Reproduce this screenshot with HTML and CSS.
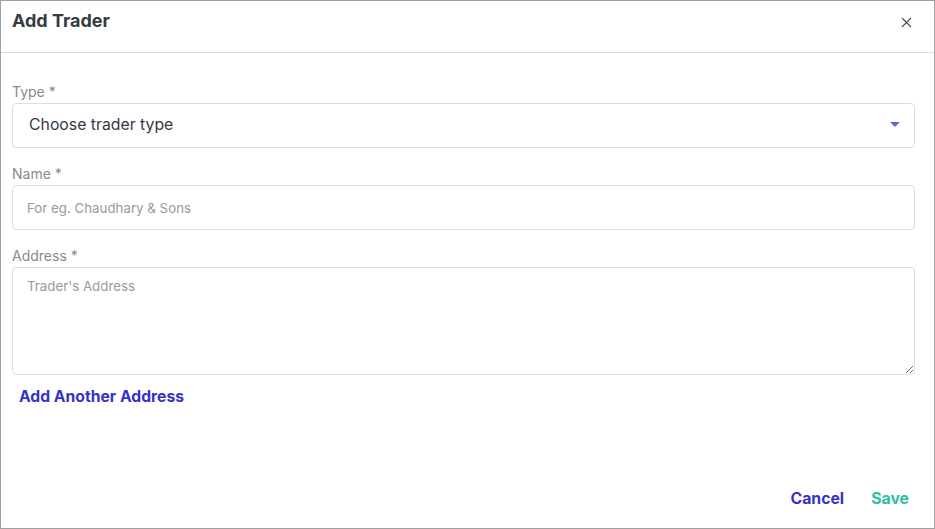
FILE: index.html
```html
<!DOCTYPE html>
<html lang="en">
  <head>
    <meta charset="UTF-8" />
    <title>Add Trader</title>
    <link rel="stylesheet" href="styles.css">
  </head>
  <body>
    <div class="dialog">
      <div class="header">
        <h2>Add Trader</h2>
        <button class="close" type="button" aria-label="Close">
          <svg width="11" height="11" viewBox="0 0 11 11">
            <path d="M1 1L10 10M10 1L1 10" stroke="#4a4a4a" stroke-width="1.1" fill="none" />
          </svg>
        </button>
      </div>

      <form class="body">
        <label>Type *</label>
        <div class="select">
          <span>Choose trader type</span>
          <svg class="caret" width="10" height="6" viewBox="0 0 10 6">
            <path d="M0 0H10L5 5Z" fill="#5b6ad6" />
          </svg>
        </div>

        <label>Name *</label>
        <input type="text" placeholder="For eg. Chaudhary &amp; Sons" />

        <label>Address *</label>
        <textarea placeholder="Trader's Address"></textarea>

        <a class="link" href="#">Add Another Address</a>
      </form>

      <div class="footer">
        <button type="button" class="cancel">Cancel</button>
        <button type="button" class="save">Save</button>
      </div>
    </div>
  </body>
</html>
```

FILE: styles.css
```css
body {
  margin: 0;
  font-family: Inter, "Noto Sans", sans-serif;
  background-color: #fff;
}
.dialog {
  width: 935px;
  height: 529px;
  box-sizing: border-box;
  border: 1px solid #a0a0a0;
  display: flex;
  flex-direction: column;
}
.header {
  height: 51px;
  border-bottom: 1px solid #dcdcdc;
  display: flex;
  align-items: flex-start;
  justify-content: space-between;
  padding: 0 22px 0 11px;
}
.header h2 {
  margin: 9px 0 0;
  font-size: 18px;
  font-weight: bold;
  color: #363a42;
}
.close {
  border: none;
  background: none;
  padding: 0;
  margin-top: 16px;
  width: 11px;
  height: 11px;
  display: flex;
  cursor: pointer;
}
.body {
  flex: 1;
  display: flex;
  flex-direction: column;
  padding: 30px 19px 0 11px;
}
label {
  font-size: 14px;
  color: #8a8a8a;
  line-height: 17px;
  margin-bottom: 3px;
}
.select,
input,
textarea {
  box-sizing: border-box;
  width: 100%;
  border: 1px solid #dddddd;
  border-radius: 4px;
  font-family: Inter, "Noto Sans", sans-serif;
  margin-bottom: 17px;
}
.select {
  height: 45px;
  display: flex;
  align-items: center;
  justify-content: space-between;
  padding: 0 14px 3px 16px;
  font-size: 15.8px;
  color: #363844;
}
.caret {
  margin-top: 2px;
}
input {
  height: 45px;
  padding: 0 14px;
  font-size: 13.3px;
}
textarea {
  height: 108px;
  padding: 10px 14px;
  font-size: 13.3px;
  margin-bottom: 12px;
  resize: vertical;
}
input::placeholder,
textarea::placeholder {
  color: #9a9a9a;
}
.link {
  margin-left: 7px;
  font-size: 15.7px;
  font-weight: bold;
  color: #3434c4;
  text-decoration: none;
}
.footer {
  display: flex;
  justify-content: flex-end;
  gap: 27px;
  padding: 0 25px 20px 0;
}
.footer button {
  border: none;
  background: none;
  padding: 0;
  font-family: Inter, "Noto Sans", sans-serif;
  font-size: 15.8px;
  font-weight: bold;
  cursor: pointer;
}
.cancel {
  color: #3434c4;
}
.save {
  color: #2fbea6;
}
```
